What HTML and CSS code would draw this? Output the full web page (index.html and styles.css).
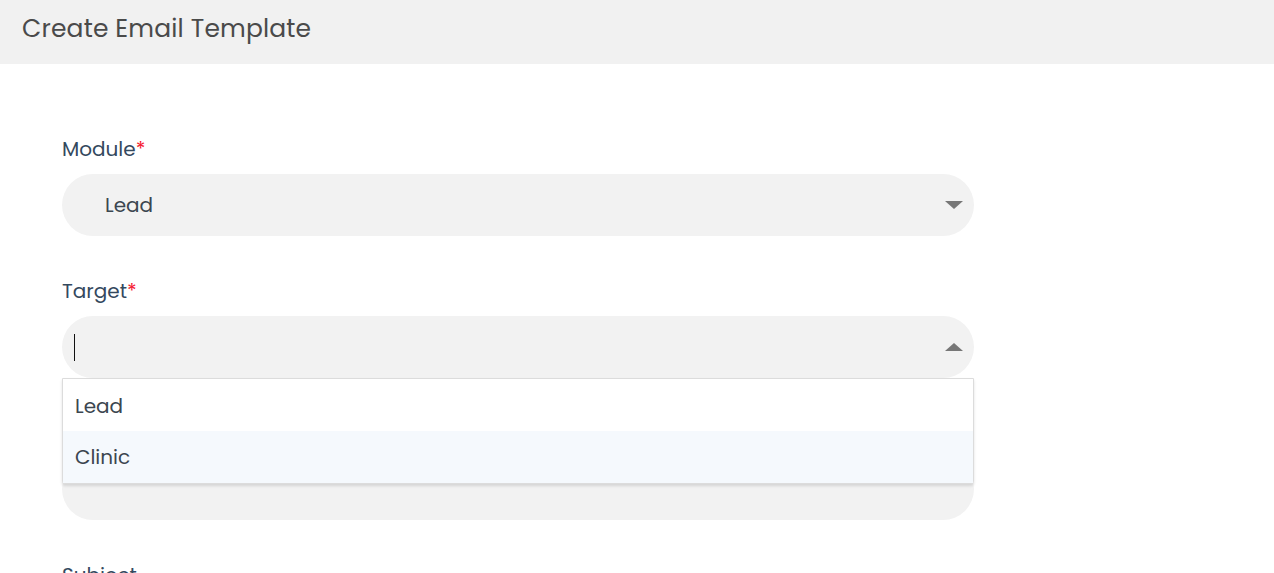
FILE: index.html
```html
<!DOCTYPE html>
<html lang="en">
<head>
    <meta charset="UTF-8">
    <meta name="viewport" content="width=device-width, initial-scale=1.0">
    <title>Create Email Template</title>
    <link rel="stylesheet" href="styles.css">
</head>
<body>
    <header class="page-header">
        <h1>Create Email Template</h1>
    </header>

    <main class="form">
        <div class="field-group">
            <label class="field-label">Module<span class="req">*</span></label>
            <div class="select">
                <span class="select-value">Lead</span>
                <span class="arrow arrow-down"></span>
            </div>
        </div>

        <div class="field-group">
            <label class="field-label">Target<span class="req">*</span></label>
            <div class="select-wrap">
                <div class="select select-open">
                    <span class="caret"></span>
                    <span class="arrow arrow-up"></span>
                </div>
                <ul class="dropdown">
                    <li class="option">Lead</li>
                    <li class="option option-hover">Clinic</li>
                </ul>
            </div>
        </div>

        <div class="field-group">
            <label class="field-label">Template Name<span class="req">*</span></label>
            <div class="select"></div>
        </div>

        <div class="field-group">
            <label class="field-label">Subject</label>
            <div class="select"></div>
        </div>
    </main>
</body>
</html>
```

FILE: styles.css
```css
* {
    margin: 0;
    padding: 0;
    box-sizing: border-box;
}

html, body {
    height: 100%;
}

body {
    font-family: 'Poppins', 'Open Sans', sans-serif;
    background: #fff;
    color: #3f4a56;
    overflow: hidden;
}

.page-header {
    height: 64px;
    background: #f1f1f1;
    padding: 11px 0 0 22px;
}

.page-header h1 {
    font-size: 25px;
    line-height: 35px;
    font-weight: 400;
    letter-spacing: 0.15px;
    color: #4a4a4a;
}

.form {
    width: 974px;
    padding: 70px 0 0 62px;
}

.field-group {
    display: flex;
    flex-direction: column;
    margin-bottom: 40px;
}

.field-label {
    font-size: 20px;
    line-height: 30px;
    margin-bottom: 10px;
    color: #34495e;
}

.req {
    color: #f51c33;
}

.select {
    height: 62px;
    border-radius: 31px;
    background: #f2f2f2;
    display: flex;
    align-items: center;
    padding-left: 43px;
    position: relative;
    font-size: 20px;
    color: #3c4650;
}

.select-wrap {
    position: relative;
}

.select-open {
    padding-left: 12px;
}

.caret {
    width: 1px;
    height: 27px;
    background: #111;
}

.arrow {
    position: absolute;
    right: 11px;
    top: 50%;
    width: 0;
    height: 0;
    border-left: 9px solid transparent;
    border-right: 9px solid transparent;
}

.arrow-down {
    border-top: 8px solid #777;
    margin-top: -4px;
}

.arrow-up {
    border-bottom: 8px solid #777;
    margin-top: -4px;
}

.dropdown {
    list-style: none;
    position: absolute;
    top: 100%;
    left: 0;
    right: 0;
    background: #fff;
    border: 1px solid #dcdcdc;
    border-radius: 0 0 3px 3px;
    box-shadow: 0 2px 3px rgba(0,0,0,0.12);
    z-index: 10;
}

.option {
    height: 52px;
    display: flex;
    align-items: center;
    padding-left: 12px;
    font-size: 20px;
    color: #3c4650;
}

.option:first-child {
    padding-top: 2px;
}

.option-hover {
    background: #f5f9fd;
}
```
